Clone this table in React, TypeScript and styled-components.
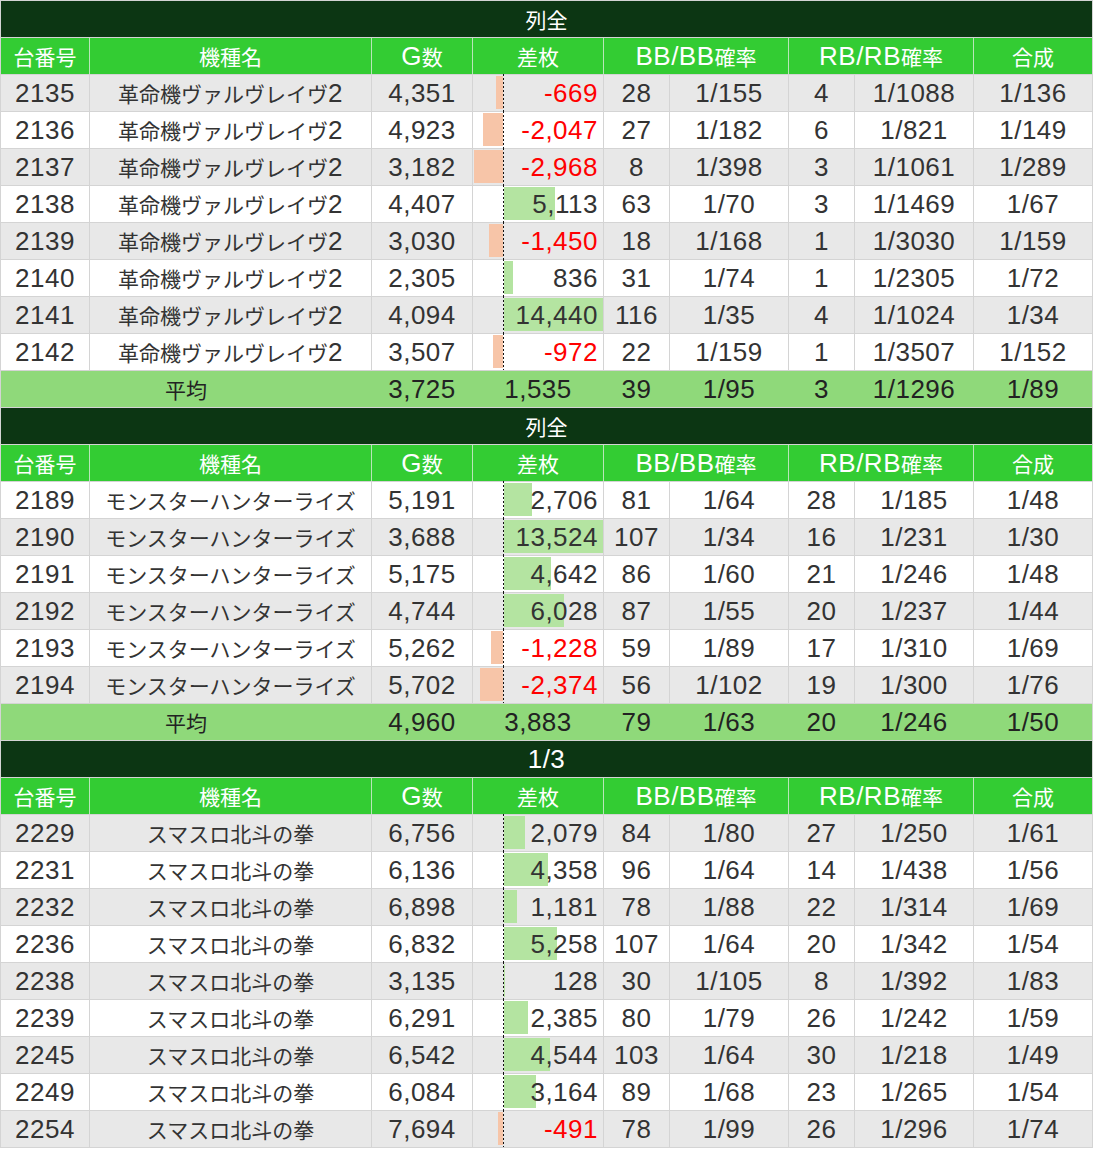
import React from "react";
import styled, { createGlobalStyle } from "styled-components";

const GlobalStyle = createGlobalStyle`
  html, body { margin: 0; padding: 0; background: #ffffff; }
  body { font-family: "Liberation Sans", "Noto Sans CJK JP", sans-serif; }
`;

const COLS = "88px 281px 100px 130px 65px 118px 65px 118px 118px";
const AXIS = 30;

const Sheet = styled.div`
  width: 1093px;
  box-sizing: border-box;
  display: flex;
  flex-direction: column;
  gap: 1px;
  padding: 1px;
  background: #d4d4d4;
`;

const TitleRow = styled.div`
  height: 36px;
  line-height: 36px;
  background: #0c3613;
  color: #ffffff;
  text-align: center;
  font-size: 26px;
  letter-spacing: 0.5px;
`;

const Row = styled.div<{ $bg: string }>`
  display: grid;
  grid-template-columns: ${COLS};
  column-gap: 1px;
  height: 36px;
  background: ${(p) => p.$bg};
`;

const Cell = styled.div<{ $bg?: string; $color?: string; $span?: number }>`
  height: 36px;
  line-height: 36px;
  text-align: center;
  font-size: 26px;
  letter-spacing: 0.5px;
  white-space: nowrap;
  overflow: visible;
  background: ${(p) => p.$bg ?? "transparent"};
  color: ${(p) => p.$color ?? "#333333"};
  ${(p) => (p.$span ? `grid-column: span ${p.$span};` : "")}
`;

const HeadCell = styled(Cell)`
  background: #33cc33;
  color: #ffffff;
`;

const DiffCell = styled.div<{ $bg: string }>`
  position: relative;
  height: 36px;
  line-height: 36px;
  text-align: right;
  padding-right: 5px;
  box-sizing: border-box;
  font-size: 26px;
  letter-spacing: 0.5px;
  background: ${(p) => p.$bg};
`;

const Bar = styled.div<{ $neg: boolean }>`
  position: absolute;
  top: 1px;
  bottom: 2px;
  background: ${(p) => (p.$neg ? "#f7c5a8" : "#b4e4a1")};
  ${(p) => (p.$neg ? `right: calc(100% - ${AXIS}px);` : `left: ${AXIS + 1}px;`)}
`;

const Axis = styled.div`
  position: absolute;
  left: ${AXIS}px;
  top: -1px;
  bottom: 0;
  width: 1px;
  background: repeating-linear-gradient(to bottom, #111111 0 2px, transparent 2px 4px);
`;

const Value = styled.span<{ $neg: boolean }>`
  position: relative;
  color: ${(p) => (p.$neg ? "#ff0000" : "#333333")};
`;

const Jp = styled.span`
  font-family: "Noto Sans CJK JP", sans-serif;
  font-size: 21px;
  letter-spacing: 0;
`;

function mix(text: string) {
  const parts = text.split(/([\u3000-\u30ff\u4e00-\u9fff\uff00-\uffef]+)/);
  return parts.map((p, i) =>
    /[\u3000-\u30ff\u4e00-\u9fff\uff00-\uffef]/.test(p) ? <Jp key={i}>{p}</Jp> : <React.Fragment key={i}>{p}</React.Fragment>
  );
}

type DataRow = [string, string, string, number, string, string, string, string, string];
type Table = {
  title: string;
  name: string;
  startGray: boolean;
  rows: DataRow[];
  avg?: string[];
};

const tables: Table[] = [
  {
    title: "列全",
    name: "革命機ヴァルヴレイヴ2",
    startGray: true,
    rows: [
      ["2135", "4,351", "-669", -7, "28", "1/155", "4", "1/1088", "1/136"],
      ["2136", "4,923", "-2,047", -20, "27", "1/182", "6", "1/821", "1/149"],
      ["2137", "3,182", "-2,968", -29, "8", "1/398", "3", "1/1061", "1/289"],
      ["2138", "4,407", "5,113", 51, "63", "1/70", "3", "1/1469", "1/67"],
      ["2139", "3,030", "-1,450", -14, "18", "1/168", "1", "1/3030", "1/159"],
      ["2140", "2,305", "836", 9, "31", "1/74", "1", "1/2305", "1/72"],
      ["2141", "4,094", "14,440", 99, "116", "1/35", "4", "1/1024", "1/34"],
      ["2142", "3,507", "-972", -10, "22", "1/159", "1", "1/3507", "1/152"],
    ] as unknown as DataRow[],
    avg: ["3,725", "1,535", "39", "1/95", "3", "1/1296", "1/89"],
  },
  {
    title: "列全",
    name: "モンスターハンターライズ",
    startGray: false,
    rows: [
      ["2189", "5,191", "2,706", 28, "81", "1/64", "28", "1/185", "1/48"],
      ["2190", "3,688", "13,524", 99, "107", "1/34", "16", "1/231", "1/30"],
      ["2191", "5,175", "4,642", 47, "86", "1/60", "21", "1/246", "1/48"],
      ["2192", "4,744", "6,028", 60, "87", "1/55", "20", "1/237", "1/44"],
      ["2193", "5,262", "-1,228", -12, "59", "1/89", "17", "1/310", "1/69"],
      ["2194", "5,702", "-2,374", -23, "56", "1/102", "19", "1/300", "1/76"],
    ] as unknown as DataRow[],
    avg: ["4,960", "3,883", "79", "1/63", "20", "1/246", "1/50"],
  },
  {
    title: "1/3",
    name: "スマスロ北斗の拳",
    startGray: true,
    rows: [
      ["2229", "6,756", "2,079", 21, "84", "1/80", "27", "1/250", "1/61"],
      ["2231", "6,136", "4,358", 44, "96", "1/64", "14", "1/438", "1/56"],
      ["2232", "6,898", "1,181", 13, "78", "1/88", "22", "1/314", "1/69"],
      ["2236", "6,832", "5,258", 53, "107", "1/64", "20", "1/342", "1/54"],
      ["2238", "3,135", "128", 1, "30", "1/105", "8", "1/392", "1/83"],
      ["2239", "6,291", "2,385", 24, "80", "1/79", "26", "1/242", "1/59"],
      ["2245", "6,542", "4,544", 46, "103", "1/64", "30", "1/218", "1/49"],
      ["2249", "6,084", "3,164", 32, "89", "1/68", "23", "1/265", "1/54"],
      ["2254", "7,694", "-491", -5, "78", "1/99", "26", "1/296", "1/74"],
    ] as unknown as DataRow[],
  },
];

const HEADERS: [string, number][] = [
  ["台番号", 1],
  ["機種名", 1],
  ["G数", 1],
  ["差枚", 1],
  ["BB/BB確率", 2],
  ["RB/RB確率", 2],
  ["合成", 1],
];

function HeaderRow() {
  return (
    <Row $bg="#b9e6b9">
      {HEADERS.map(([h, span]) => (
        <HeadCell key={h} $span={span > 1 ? span : undefined}>
          {mix(h)}
        </HeadCell>
      ))}
    </Row>
  );
}

function MachineRow({ r, name, gray }: { r: DataRow; name: string; gray: boolean }) {
  const bg = gray ? "#e8e8e8" : "#ffffff";
  const [no, g, diff, bar, bb, bbp, rb, rbp, total] = r as unknown as [
    string, string, string, number, string, string, string, string, string
  ];
  const neg = bar < 0;
  return (
    <Row $bg="#d4d4d4">
      <Cell $bg={bg}>{no}</Cell>
      <Cell $bg={bg}>{mix(name)}</Cell>
      <Cell $bg={bg}>{g}</Cell>
      <DiffCell $bg={bg}>
        <Bar $neg={neg} style={{ width: Math.abs(bar) }} />
        <Axis />
        <Value $neg={neg}>{diff}</Value>
      </DiffCell>
      <Cell $bg={bg}>{bb}</Cell>
      <Cell $bg={bg}>{bbp}</Cell>
      <Cell $bg={bg}>{rb}</Cell>
      <Cell $bg={bg}>{rbp}</Cell>
      <Cell $bg={bg}>{total}</Cell>
    </Row>
  );
}

function AverageRow({ values }: { values: string[] }) {
  return (
    <Row $bg="#8fd97a">
      <Cell $span={2} $color="#222222">
        <Jp>平均</Jp>
      </Cell>
      {values.map((v, i) => (
        <Cell key={i} $color="#222222">
          {v}
        </Cell>
      ))}
    </Row>
  );
}

export default function App() {
  return (
    <>
      <GlobalStyle />
      <Sheet>
        {tables.map((t, ti) => (
          <React.Fragment key={ti}>
            <TitleRow>{mix(t.title)}</TitleRow>
            <HeaderRow />
            {t.rows.map((r, i) => (
              <MachineRow
                key={i}
                r={r}
                name={t.name}
                gray={t.startGray ? i % 2 === 0 : i % 2 === 1}
              />
            ))}
            {t.avg && <AverageRow values={t.avg} />}
          </React.Fragment>
        ))}
      </Sheet>
    </>
  );
}
